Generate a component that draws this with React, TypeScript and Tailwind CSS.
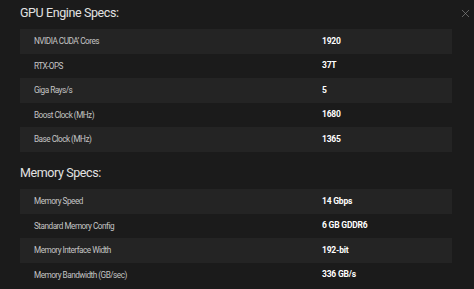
import { X } from "lucide-react";

interface SpecRow {
  label: string;
  value: string;
}

const gpuSpecs: SpecRow[] = [
  { label: "NVIDIA CUDA\u02BC Cores", value: "1920" },
  { label: "RTX-OPS", value: "37T" },
  { label: "Giga Rays/s", value: "5" },
  { label: "Boost Clock (MHz)", value: "1680" },
  { label: "Base Clock (MHz)", value: "1365" },
];

const memorySpecs: SpecRow[] = [
  { label: "Memory Speed", value: "14 Gbps" },
  { label: "Standard Memory Config", value: "6 GB GDDR6" },
  { label: "Memory Interface Width", value: "192-bit" },
  { label: "Memory Bandwidth (GB/sec)", value: "336 GB/s" },
];

function SpecTable({ rows }: { rows: SpecRow[] }) {
  return (
    <div className="flex flex-col">
      {rows.map((row, index) => (
        <div
          key={index}
          className={`flex items-center h-[24.5px] ${index % 2 === 0 ? "bg-[#242424]" : "bg-transparent"}`}
        >
          <span className="w-[302px] pl-[14px] text-[8.2px] tracking-[-0.5px] text-[#c4c4c4]">{row.label}</span>
          <span className="text-[8.5px] font-bold tracking-[-0.2px] text-white">{row.value}</span>
        </div>
      ))}
    </div>
  );
}

export default function App() {
  return (
    <div
      className="relative w-[474px] h-[289px] overflow-hidden bg-[#1b1b1b] pl-[20px] pr-[22px]"
      style={{ fontFamily: 'Roboto, "Liberation Sans", sans-serif' }}
    >
      <button className="absolute right-[2px] top-[7px] text-[#8a8a8a]">
        <X className="w-[13px] h-[13px]" strokeWidth={1.2} />
      </button>
      <h2 className="h-[29px] pt-[5px] text-[12.5px] leading-[16px] tracking-[-0.4px] text-[#e2e2e2]">
        GPU Engine Specs:
      </h2>
      <SpecTable rows={gpuSpecs} />
      <h2 className="h-[37.5px] pt-[13px] text-[12.5px] leading-[16px] tracking-[-0.4px] text-[#e2e2e2]">
        Memory Specs:
      </h2>
      <SpecTable rows={memorySpecs} />
    </div>
  );
}
